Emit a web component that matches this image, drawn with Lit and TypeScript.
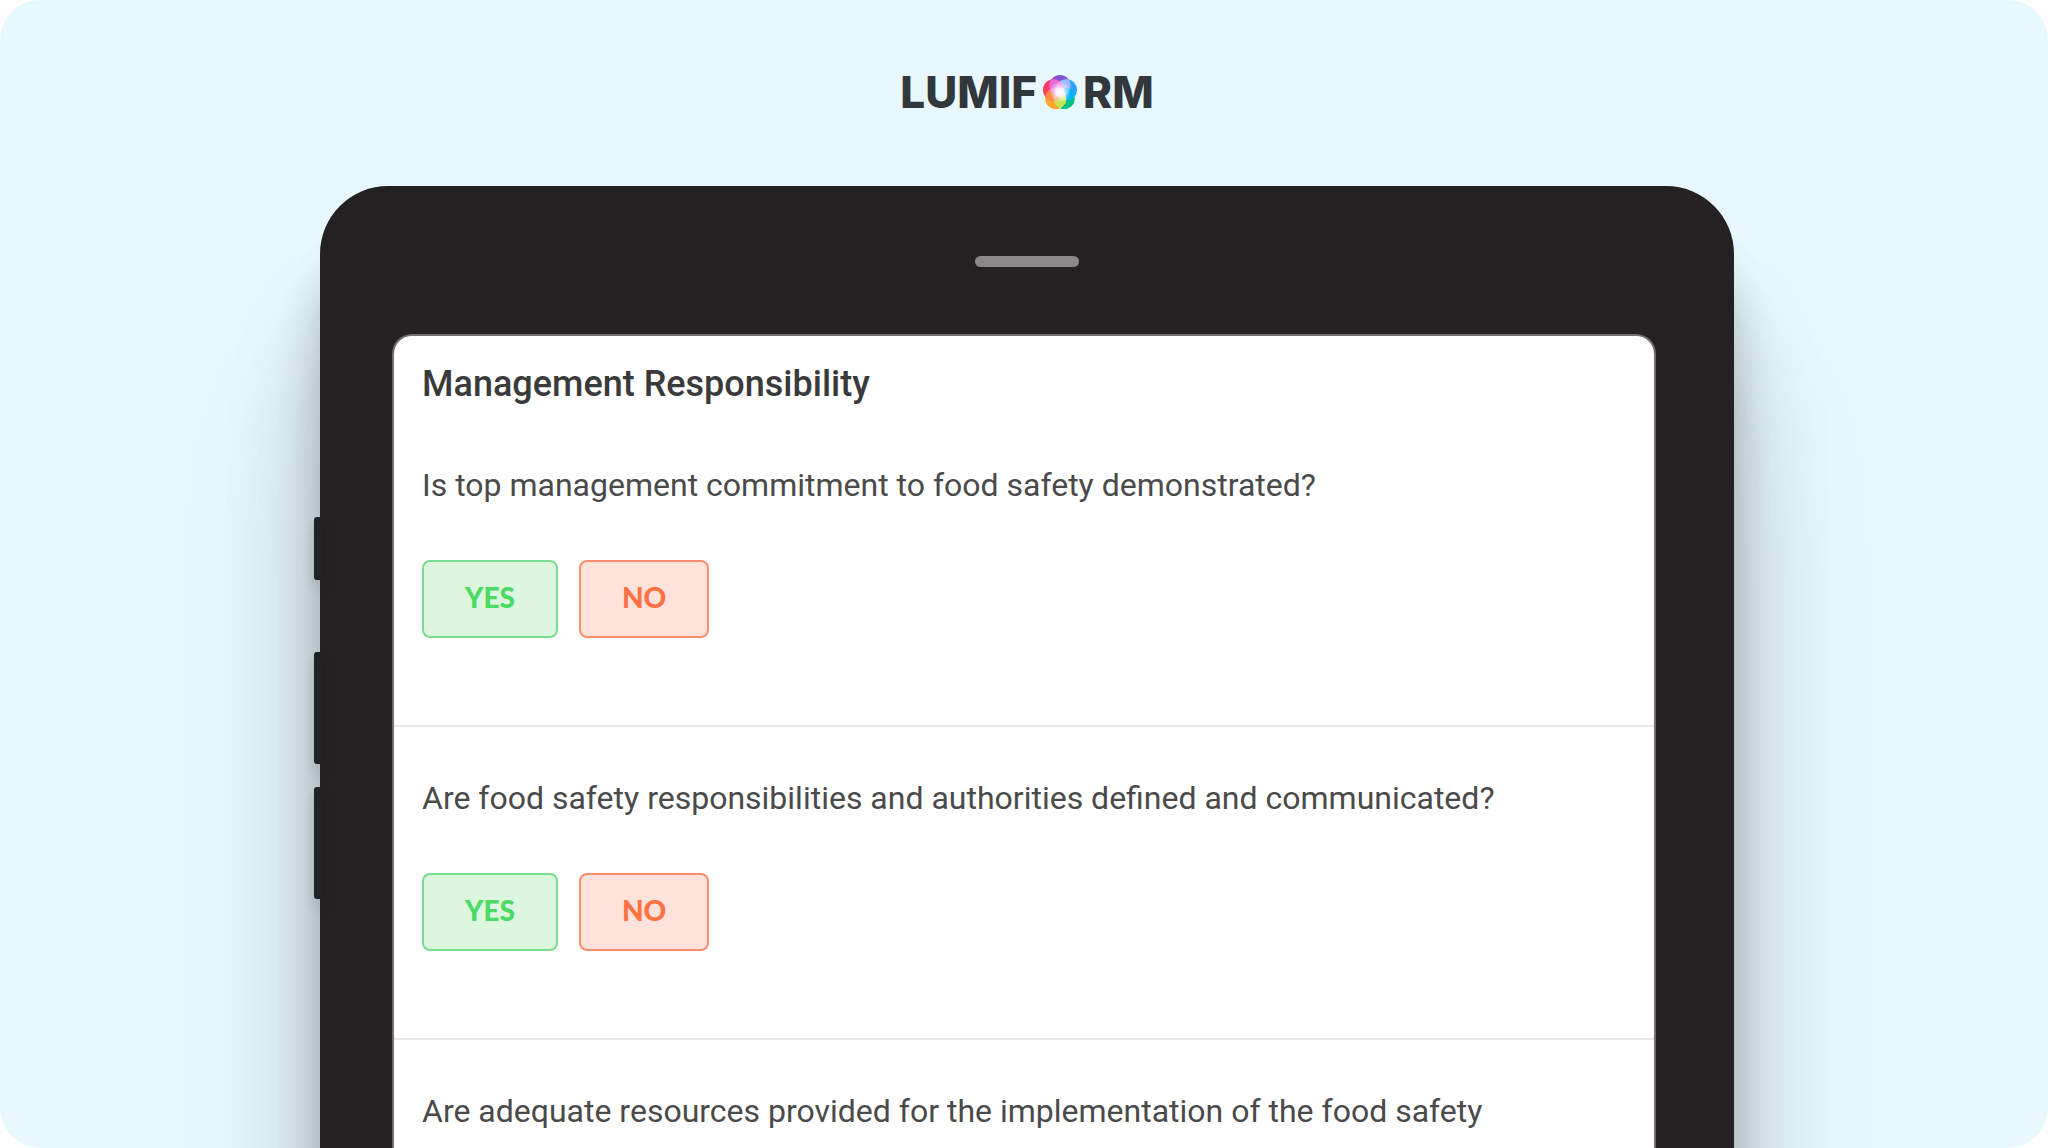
import { LitElement, css, html, svg } from "lit";
import { customElement, property } from "lit/decorators.js";

const PETALS = [
  { cx: 16, cy: 10, fill: "#8452d2" },
  { cx: 22, cy: 14, fill: "#2ea2ff" },
  { cx: 20, cy: 22, fill: "#00bf86" },
  { cx: 12, cy: 22, fill: "#ffa52a" },
  { cx: 10, cy: 14, fill: "#ff3a66" },
];

/* Colour of the lens where each petal meets the next one. */
const LENSES = ["#9dbcff", "#00b6f8", "#c6e455", "#ff8a4a", "#e968d4"];

@customElement("brand-logo")
export class BrandLogo extends LitElement {
  static styles = css`
    :host {
      display: flex;
      justify-content: center;
      align-items: center;
      gap: 6px;
      height: 56px;
      color: #32373b;
      font-family: Inter, "Liberation Sans", sans-serif;
      font-size: 44px;
      font-weight: 800;
      line-height: 56px;
    }
    .mark {
      width: 34px;
      height: 34px;
    }
  `;

  render() {
    return html`
      <span>LUMIF</span>
      <svg class="mark" viewBox="0 0 32 32" role="img" aria-label="O">
        <defs>
          <radialGradient id="glow">
            <stop offset="0" stop-color="#fff" stop-opacity="1"></stop>
            <stop offset="0.4" stop-color="#fff" stop-opacity="0.7"></stop>
            <stop offset="1" stop-color="#fff" stop-opacity="0"></stop>
          </radialGradient>
          ${PETALS.map(
            (p, i) => svg`<clipPath id="p${i}"><circle cx=${p.cx} cy=${p.cy} r="10"></circle></clipPath>`,
          )}
        </defs>
        ${PETALS.map((p) => svg`<circle cx=${p.cx} cy=${p.cy} r="10" fill=${p.fill}></circle>`)}
        ${PETALS.map((p, i) => {
          const next = PETALS[(i + 1) % PETALS.length];
          return svg`<circle cx=${next.cx} cy=${next.cy} r="10" fill=${LENSES[i]} clip-path="url(#p${i})"></circle>`;
        })}
        ${PETALS.map((p, i) => {
          const next = PETALS[(i + 2) % PETALS.length];
          return svg`<circle cx=${next.cx} cy=${next.cy} r="10" fill="#fff" fill-opacity="0.22" clip-path="url(#p${i})"></circle>`;
        })}
        <circle cx="16" cy="16" r="10" fill="url(#glow)"></circle>
      </svg>
      <span>RM</span>
    `;
  }
}

@customElement("audit-question")
export class AuditQuestion extends LitElement {
  @property() text = "";
  @property({ type: Boolean }) answers = false;

  static styles = css`
    :host {
      display: block;
      padding: 51px 28px 87px;
    }
    .text {
      margin: 0;
      color: #4a4a4a;
      font-size: 32px;
      font-weight: 400;
      line-height: 40px;
    }
    .answers {
      display: flex;
      gap: 21px;
      margin-top: 55px;
    }
    .answer {
      box-sizing: border-box;
      height: 78px;
      padding: 0 41px 4px;
      border: 2px solid;
      border-radius: 8px;
      font-family: Lato, "Liberation Sans", sans-serif;
      font-size: 28px;
      font-weight: 900;
      line-height: 32px;
      cursor: pointer;
    }
    .yes {
      border-color: #7bdc8f;
      background: #ddf7df;
      color: #4cd964;
    }
    .no {
      border-color: #f98e70;
      background: #ffe2da;
      color: #ff7043;
    }
  `;

  render() {
    return html`
      <p class="text" id="question">${this.text}</p>
      ${this.answers
        ? html`<div class="answers" role="group" aria-labelledby="question">
            <button class="answer yes" type="button">YES</button>
            <button class="answer no" type="button">NO</button>
          </div>`
        : null}
    `;
  }
}

@customElement("app-root")
export class AppRoot extends LitElement {
  static styles = css`
    :host {
      display: block;
      background: #fff;
      font-family: Roboto, "Liberation Sans", sans-serif;
    }
    .stage {
      display: flex;
      flex-direction: column;
      box-sizing: border-box;
      height: 100vh;
      padding: 64px 314px 0 320px;
      border-radius: 40px;
      background: #e7f9ff;
      overflow: hidden;
    }
    .device {
      position: relative;
      flex: 1 0 auto;
      display: flex;
      flex-direction: column;
      margin-top: 66px;
      margin-bottom: -200px;
      padding-top: 70px;
      border-radius: 68px 68px 0 0;
      background: #232122;
      box-shadow:
        0 70px 44px rgba(0, 0, 0, 0.2),
        0 130px 100px rgba(0, 0, 0, 0.15),
        0 180px 180px rgba(0, 0, 0, 0.12);
    }
    .keys {
      position: absolute;
      top: 331px;
      left: -6px;
      width: 8px;
    }
    .key {
      height: 112px;
      margin-bottom: 23px;
      border-radius: 3px 0 0 3px;
      background: #202223;
      box-shadow: 0 8px 12px rgba(0, 0, 0, 0.14);
    }
    .key.short {
      height: 63px;
      margin-bottom: 72px;
    }
    .speaker {
      align-self: center;
      width: 104px;
      height: 11px;
      border-radius: 6px;
      background: #8a8889;
    }
    .screen {
      flex: 1;
      margin: 67px 78px 0 72px;
      border: 2px solid #716e6f;
      border-bottom: 0;
      border-radius: 20px 20px 0 0;
      background: #fff;
    }
    .title {
      margin: 0;
      padding: 28px 28px 10px;
      color: #3a3a3a;
      font-size: 36px;
      font-weight: 500;
      line-height: 40px;
    }
    .row + .row {
      border-top: 2px solid #e8e8e8;
    }
  `;

  render() {
    return html`
      <main class="stage">
        <brand-logo></brand-logo>
        <section class="device">
          <div class="keys">
            <div class="key short"></div>
            <div class="key"></div>
            <div class="key"></div>
          </div>
          <div class="speaker"></div>
          <div class="screen">
            <h1 class="title">Management Responsibility</h1>
            <audit-question
              class="row"
              answers
              text="Is top management commitment to food safety demonstrated?"
            ></audit-question>
            <audit-question
              class="row"
              answers
              text="Are food safety responsibilities and authorities defined and communicated?"
            ></audit-question>
            <audit-question
              class="row"
              text="Are adequate resources provided for the implementation of the food safety"
            ></audit-question>
          </div>
        </section>
      </main>
    `;
  }
}
